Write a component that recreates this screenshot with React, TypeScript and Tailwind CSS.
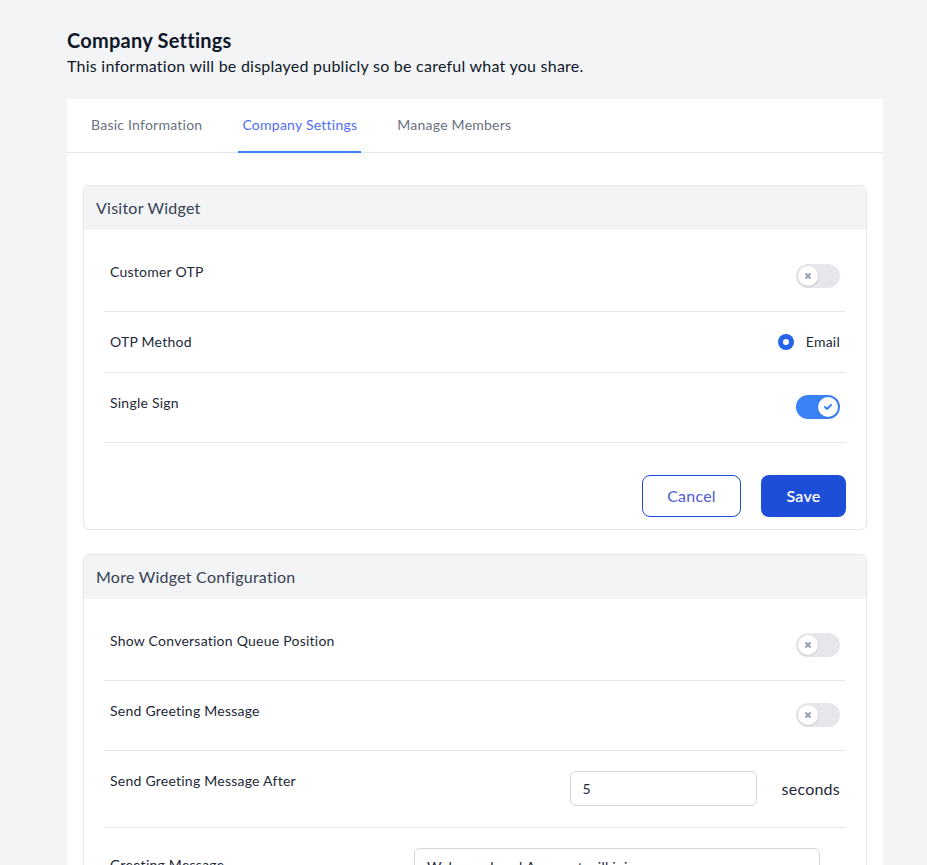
import React, { useState } from 'react';

const Toggle = ({ on }: { on: boolean }) => (
  <button
    type="button"
    className={`relative inline-flex h-6 w-11 shrink-0 items-center rounded-full transition-colors ${on ? 'bg-[#3b82f6]' : 'bg-gray-200'}`}
  >
    <span
      className={`absolute top-0.5 flex h-5 w-5 items-center justify-center rounded-full bg-white shadow ${on ? 'left-[22px]' : 'left-0.5'}`}
    >
      {on ? (
        <svg viewBox="0 0 12 12" className="h-3 w-3 text-[#3b82f6]" fill="currentColor">
          <path d="M3.707 5.293a1 1 0 00-1.414 1.414l1.414-1.414zM5 8l-.707.707a1 1 0 001.414 0L5 8zm4.707-3.293a1 1 0 00-1.414-1.414l1.414 1.414zm-7.414 2l2 2 1.414-1.414-2-2-1.414 1.414zm3.414 2l4-4-1.414-1.414-4 4 1.414 1.414z" />
        </svg>
      ) : (
        <svg viewBox="0 0 12 12" className="h-3 w-3 text-gray-400" fill="none">
          <path d="M4 8l2-2m0 0l2-2M6 6L4 4m2 2l2 2" stroke="currentColor" strokeWidth="2" strokeLinecap="round" strokeLinejoin="round" />
        </svg>
      )}
    </span>
  </button>
);

const Row = ({ label, children, last }: { label: string; children?: React.ReactNode; last?: boolean }) => (
  <div className={`flex items-start justify-between px-1.5 pt-5 ${last ? '' : 'border-b border-gray-200'}`}>
    <span className={`text-sm leading-5 text-gray-800 ${last ? 'mt-[7px]' : ''}`}>{label}</span>
    {children}
  </div>
);

const Card = ({ title, children }: { title: string; children: React.ReactNode }) => (
  <div className="rounded-md border border-gray-200 bg-white">
    <div className="flex h-11 items-center rounded-t-md bg-gray-100 px-3">
      <h3 className="text-base text-gray-700">{title}</h3>
    </div>
    <div className="px-5 pt-3">{children}</div>
  </div>
);

const tabs = ['Basic Information', 'Company Settings', 'Manage Members'];

export default function App() {
  const [active, setActive] = useState('Company Settings');

  return (
    <div className="min-h-screen bg-gray-100 pl-[67px] pr-[44px] pt-[26px] font-['Lato',sans-serif] tracking-[0.015em]">
      <h1 className="text-xl font-bold leading-7 text-gray-900">Company Settings</h1>
      <p className="text-base leading-6 text-gray-900">This information will be displayed publicly so be careful what you share.</p>

      <div className="mt-[21px] bg-white">
        <nav className="flex gap-8 border-b border-gray-200 pl-5">
          {tabs.map((t) => (
            <button
              key={t}
              onClick={() => setActive(t)}
              className={`-mb-px border-b-2 px-1 py-4 text-sm leading-5 ${active === t ? 'border-[#3b82f6] text-[#4f6ef7]' : 'border-transparent text-gray-500'}`}
            >
              {t}
            </button>
          ))}
        </nav>

        <div className="space-y-6 px-4 pt-8">
          <Card title="Visitor Widget">
            <Row label="Customer OTP">
              <div className="h-[49px] pt-0.5">
                <Toggle on={false} />
              </div>
            </Row>
            <Row label="OTP Method">
              <label className="flex h-[40px] items-start gap-3 text-sm leading-5 text-gray-800">
                <span className="mt-0.5 flex h-4 w-4 items-center justify-center rounded-full bg-[#2563eb]">
                  <span className="h-1.5 w-1.5 rounded-full bg-white" />
                </span>
                Email
              </label>
            </Row>
            <Row label="Single Sign">
              <div className="h-[49px] pt-0.5">
                <Toggle on={true} />
              </div>
            </Row>
            <div className="flex justify-end gap-5 pb-3 pt-8">
              <button className="h-[42px] w-[99px] rounded-lg border border-[#1d4ed8] text-base text-[#4f5bd5]">Cancel</button>
              <button className="h-[42px] w-[85px] rounded-lg bg-[#1d4ed8] text-base font-semibold text-white">Save</button>
            </div>
          </Card>

          <Card title="More Widget Configuration">
            <Row label="Show Conversation Queue Position">
              <div className="h-[49px] pt-0.5">
                <Toggle on={false} />
              </div>
            </Row>
            <Row label="Send Greeting Message">
              <div className="h-[49px] pt-0.5">
                <Toggle on={false} />
              </div>
            </Row>
            <Row label="Send Greeting Message After">
              <div className="flex h-[56px] items-start gap-[25px]">
                <input
                  defaultValue="5"
                  className="h-[35px] w-[187px] rounded-md border border-gray-300 px-3 text-sm text-gray-800 outline-none"
                />
                <span className="mt-[6px] text-base leading-6 text-gray-800">seconds</span>
              </div>
            </Row>
            <Row label="Greeting Message" last>
              <textarea
                rows={3}
                defaultValue="Welcome here! An agent will join soon."
                className="mr-5 w-[406px] resize-none rounded-md border border-gray-300 px-3 py-2 text-sm text-gray-800 outline-none"
              />
            </Row>
          </Card>
        </div>
      </div>
    </div>
  );
}
